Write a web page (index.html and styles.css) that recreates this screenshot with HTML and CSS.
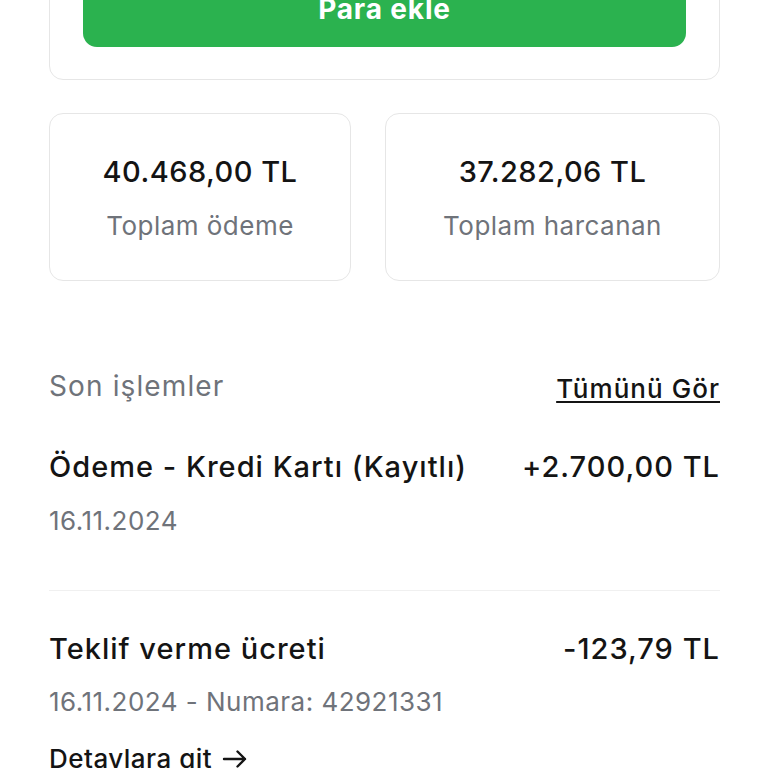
FILE: index.html
```html
<!DOCTYPE html>
<html lang="tr">
<head>
<meta charset="utf-8">
<link rel="stylesheet" href="styles.css">
</head>
<body>
<main class="page">
  <section class="top-card">
    <button class="btn-add">Para ekle</button>
  </section>

  <section class="stats">
    <div class="stat">
      <div class="stat-value">40.468,00 TL</div>
      <div class="stat-label">Toplam ödeme</div>
    </div>
    <div class="stat">
      <div class="stat-value">37.282,06 TL</div>
      <div class="stat-label">Toplam harcanan</div>
    </div>
  </section>

  <section class="recent">
    <div class="recent-head">
      <h2 class="recent-title">Son işlemler</h2>
      <a class="see-all" href="#">Tümünü Gör</a>
    </div>

    <div class="tx tx-first">
      <div class="tx-row">
        <span class="tx-name">Ödeme - Kredi Kartı (Kayıtlı)</span>
        <span class="tx-amount">+2.700,00 TL</span>
      </div>
      <div class="tx-meta">16.11.2024</div>
    </div>

    <div class="tx tx-second">
      <div class="tx-row">
        <span class="tx-name">Teklif verme ücreti</span>
        <span class="tx-amount">-123,79 TL</span>
      </div>
      <div class="tx-meta">16.11.2024 - Numara: 42921331</div>
      <a class="tx-link" href="#">Detaylara git
        <svg class="arrow" width="26" height="22" viewBox="0 0 26 22" aria-hidden="true"><path d="M2 11H23M15.5 3.5L23 11L15.5 18.5" fill="none" stroke="#141414" stroke-width="2.4" stroke-linecap="round" stroke-linejoin="round"/></svg>
      </a>
    </div>
  </section>
</main>
</body>
</html>
```

FILE: styles.css
```css
* { box-sizing: border-box; }
html, body { margin: 0; padding: 0; background: #fff; }
body {
  font-family: Inter, "Noto Sans", "Liberation Sans", sans-serif;
  color: #141414;
  overflow: hidden;
  height: 768px;
  letter-spacing: 0.03em;
}
.page {
  width: 671px;
  margin-left: 49px;
}
.top-card {
  margin-top: -60px;
  border: 1px solid #e6e6e6;
  border-radius: 14px;
  padding: 0 33px 32px;
}
.btn-add {
  display: block;
  width: 100%;
  height: 106px;
  border: 0;
  border-radius: 14px;
  background: #2bb24f;
  color: #fff;
  font-family: inherit;
  font-size: 28px;
  font-weight: 700;
  letter-spacing: 0.03em;
  line-height: 28px;
  padding: 29px 0 0;
  text-align: center;
  vertical-align: top;
}
.stats {
  display: grid;
  grid-template-columns: 302fr 335fr;
  gap: 34px;
  margin-top: 33px;
}
.stat {
  border: 1px solid #e6e6e6;
  border-radius: 14px;
  height: 168px;
  padding-top: 42px;
  text-align: center;
}
.stat-value {
  font-size: 29px;
  font-weight: 500;
  line-height: 32px;
}
.stat-label {
  margin-top: 22px;
  font-size: 26px;
  line-height: 32px;
  color: #6f737a;
}
.recent { margin-top: 87px; }
.recent-head {
  display: flex;
  justify-content: space-between;
  align-items: center;
  height: 36px;
}
.recent-title {
  margin: 0;
  font-size: 28px;
  font-weight: 400;
  line-height: 36px;
  letter-spacing: 0.04em;
  color: #6f737a;
}
.see-all {
  font-size: 26px;
  font-weight: 500;
  letter-spacing: 0.04em;
  color: #141414;
  text-decoration: underline;
  text-decoration-thickness: 2px;
  text-underline-offset: 3px;
  padding-top: 4px;
}
.tx { padding-top: 46px; }
.tx-row {
  display: flex;
  justify-content: space-between;
  align-items: center;
  font-size: 29px;
  font-weight: 500;
  line-height: 34px;
  letter-spacing: 0.035em;
}
.tx-meta {
  margin-top: 21px;
  font-size: 26px;
  line-height: 32px;
  color: #6f737a;
}
.tx-first { padding-bottom: 53px; }
.tx-second {
  border-top: 1px solid #f0f0f0;
  padding-top: 41px;
}
.tx-second .tx-meta { margin-top: 20px; }
.tx-link {
  display: inline-flex;
  align-items: center;
  gap: 10px;
  margin-top: 25px;
  font-size: 26px;
  font-weight: 500;
  line-height: 32px;
  color: #141414;
  text-decoration: none;
}
.arrow { display: block; }
```
